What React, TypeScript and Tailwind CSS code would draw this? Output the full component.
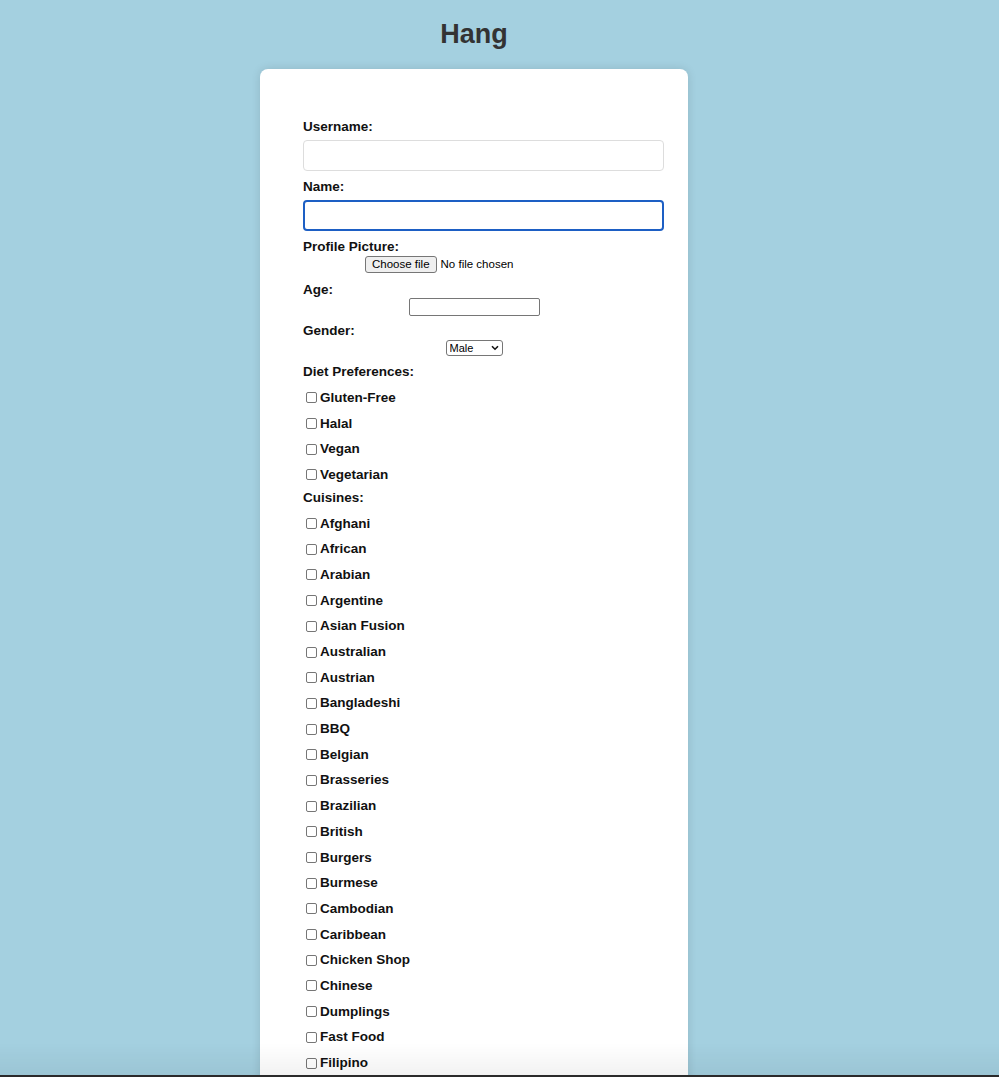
import { useState } from "react";

const dietOptions = ["Gluten-Free", "Halal", "Vegan", "Vegetarian"];

const cuisineOptions = [
  "Afghani",
  "African",
  "Arabian",
  "Argentine",
  "Asian Fusion",
  "Australian",
  "Austrian",
  "Bangladeshi",
  "BBQ",
  "Belgian",
  "Brasseries",
  "Brazilian",
  "British",
  "Burgers",
  "Burmese",
  "Cambodian",
  "Caribbean",
  "Chicken Shop",
  "Chinese",
  "Dumplings",
  "Fast Food",
  "Filipino",
  "Fish & Chips",
  "French",
  "German",
  "Greek",
  "Indian",
  "Italian",
];

function CheckRow({
  label,
  checked,
  onToggle,
}: {
  label: string;
  checked: boolean;
  onToggle: () => void;
}) {
  return (
    <label className="flex items-center h-[25.7px] text-[13.5px] font-bold text-[#111] leading-4">
      <input
        type="checkbox"
        checked={checked}
        onChange={onToggle}
        className="appearance-none w-[11px] h-[11px] ml-[3px] mr-[3px] border border-[#767676] rounded-[2px] bg-white checked:bg-[#1d5fc4] checked:border-[#1d5fc4]"
      />
      {label}
    </label>
  );
}

function FieldLabel({ text, className = "" }: { text: string; className?: string }) {
  return (
    <label className={"block text-[13.5px] font-bold leading-4 text-[#111] " + className}>
      {text}
    </label>
  );
}

function App() {
  const [username, setUsername] = useState("");
  const [name, setName] = useState("");
  const [age, setAge] = useState("");
  const [gender, setGender] = useState("Male");
  const [diet, setDiet] = useState<string[]>([]);
  const [cuisines, setCuisines] = useState<string[]>([]);

  const toggle = (list: string[], set: (v: string[]) => void, item: string) => {
    set(list.includes(item) ? list.filter((x) => x !== item) : [...list, item]);
  };

  return (
    <div
      className="min-h-screen bg-[#a4d0e0] pt-[18px] pb-10"
      style={{ fontFamily: '"Liberation Sans", Arial, Helvetica, sans-serif' }}
    >
      <div className="w-[948px]">
        <h1 className="text-center text-[27px] leading-8 font-bold text-[#333]">Hang</h1>

        <div className="mx-auto mt-[19px] w-[428px] bg-white rounded-lg shadow-[0_0_10px_rgba(0,0,0,0.12)] pt-[50px] px-[43px] pb-8">
          <form className="flex flex-col" onSubmit={(e) => e.preventDefault()}>
            <FieldLabel text="Username:" />
            <input
              type="text"
              value={username}
              onChange={(e) => setUsername(e.target.value)}
              className="mt-[5px] w-[361px] h-[31px] border border-[#ddd] rounded-[4px] px-2 text-sm outline-none"
            />

            <FieldLabel text="Name:" className="mt-[8px]" />
            <input
              type="text"
              value={name}
              onChange={(e) => setName(e.target.value)}
              className="mt-[5px] w-[361px] h-[31px] border-2 border-[#1d5fc4] rounded-[4px] px-2 text-sm outline-none"
            />

            <FieldLabel text="Profile Picture:" className="mt-[8px]" />
            <div className="mt-[1px] flex justify-center">
              <label className="w-[218px] h-[17px] flex items-center gap-[4px] text-[11.5px] text-black cursor-pointer">
                <input type="file" className="hidden" />
                <span className="h-[17px] px-[6px] flex items-center bg-[#efefef] border border-[#767676] rounded-[3px]">
                  Choose file
                </span>
                <span>No file chosen</span>
              </label>
            </div>

            <FieldLabel text="Age:" className="mt-[9px]" />
            <div className="flex justify-center">
              <input
                type="number"
                value={age}
                onChange={(e) => setAge(e.target.value)}
                className="w-[131px] h-[18px] border border-[#767676] rounded-[2px] px-1 text-[12px] outline-none"
              />
            </div>

            <FieldLabel text="Gender:" className="mt-[7px]" />
            <div className="mt-[1px] flex justify-center">
              <div className="relative w-[57px] h-[16px]">
                <select
                  value={gender}
                  onChange={(e) => setGender(e.target.value)}
                  className="block appearance-none w-[57px] h-[16px] py-0 border border-[#767676] rounded-[3px] bg-white pl-[3px] pr-[14px] text-[11px] leading-[14px] text-black outline-none"
                >
                  <option>Male</option>
                  <option>Female</option>
                  <option>Other</option>
                </select>
                <svg
                  className="absolute right-[4px] top-[5px] pointer-events-none"
                  width="8"
                  height="6"
                  viewBox="0 0 8 6"
                >
                  <path d="M1 1.2 L4 4.2 L7 1.2" fill="none" stroke="#111" strokeWidth="1.6" />
                </svg>
              </div>
            </div>

            <FieldLabel text="Diet Preferences:" className="mt-[8px]" />
            <div className="mt-[5px] flex flex-col">
              {dietOptions.map((d) => (
                <CheckRow
                  key={d}
                  label={d}
                  checked={diet.includes(d)}
                  onToggle={() => toggle(diet, setDiet, d)}
                />
              ))}
            </div>

            <FieldLabel text="Cuisines:" className="mt-[2px]" />
            <div className="mt-[5px] flex flex-col">
              {cuisineOptions.map((c) => (
                <CheckRow
                  key={c}
                  label={c}
                  checked={cuisines.includes(c)}
                  onToggle={() => toggle(cuisines, setCuisines, c)}
                />
              ))}
            </div>
          </form>
        </div>
      </div>

      {/* bottom edge of the window */}
      <div className="fixed left-0 right-0 bottom-0 pointer-events-none">
        <div className="h-[32px] bg-gradient-to-b from-transparent to-black/5" />
        <div className="h-[2px] bg-[#2a2a2a]" />
      </div>
    </div>
  );
}

export default App;
